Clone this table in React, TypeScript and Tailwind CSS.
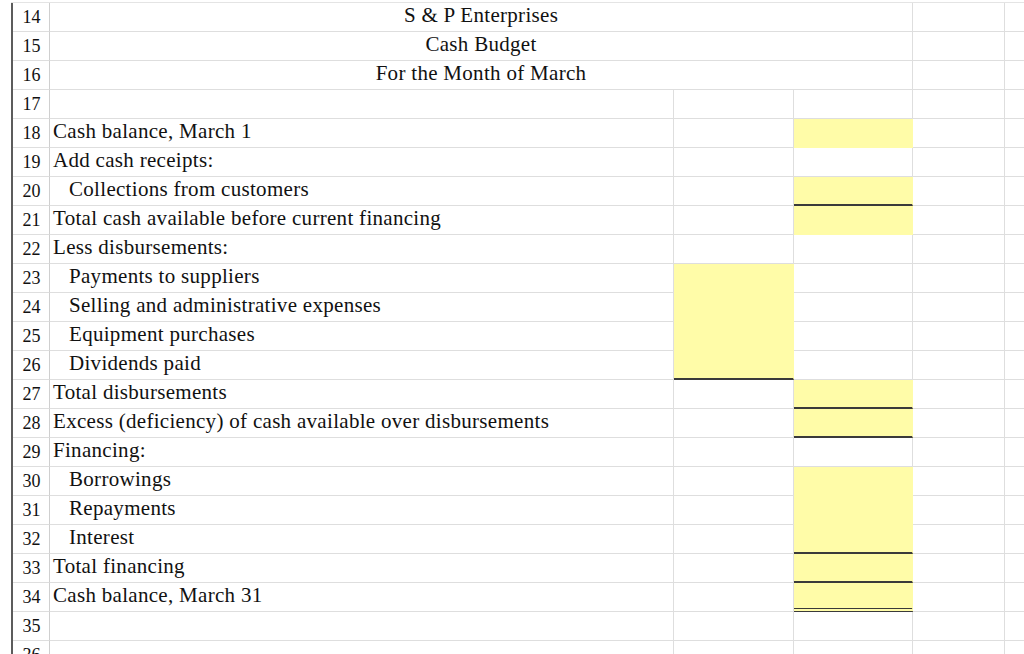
const YELLOW = "bg-[#fffca8]";

type Row = {
  n: number;
  label?: string;
  indent?: boolean;
  title?: boolean;
  b?: "fill" | "fillLine";
  c?: "fill" | "fillLine" | "fillDouble";
};

const rows: Row[] = [
  { n: 14, label: "S & P Enterprises", title: true },
  { n: 15, label: "Cash Budget", title: true },
  { n: 16, label: "For the Month of March", title: true },
  { n: 17 },
  { n: 18, label: "Cash balance, March 1", c: "fill" },
  { n: 19, label: "Add cash receipts:" },
  { n: 20, label: "Collections from customers", indent: true, c: "fillLine" },
  { n: 21, label: "Total cash available before current financing", c: "fill" },
  { n: 22, label: "Less disbursements:" },
  { n: 23, label: "Payments to suppliers", indent: true, b: "fill" },
  { n: 24, label: "Selling and administrative expenses", indent: true, b: "fill" },
  { n: 25, label: "Equipment purchases", indent: true, b: "fill" },
  { n: 26, label: "Dividends paid", indent: true, b: "fillLine" },
  { n: 27, label: "Total disbursements", c: "fillLine" },
  { n: 28, label: "Excess (deficiency) of cash available over disbursements", c: "fillLine" },
  { n: 29, label: "Financing:" },
  { n: 30, label: "Borrowings", indent: true, c: "fill" },
  { n: 31, label: "Repayments", indent: true, c: "fill" },
  { n: 32, label: "Interest", indent: true, c: "fillLine" },
  { n: 33, label: "Total financing", c: "fillLine" },
  { n: 34, label: "Cash balance, March 31", c: "fillDouble" },
  { n: 35 },
  { n: 36 },
];

function valueCell(width: string, kind?: "fill" | "fillLine" | "fillDouble") {
  if (!kind) return <div className={`${width} h-full border-r border-b border-[#dedede]`} />;
  if (kind === "fill")
    return <div className={`${width} h-full ${YELLOW} border-r border-b border-[#fffca8]`} />;
  if (kind === "fillLine")
    return <div className={`${width} h-full ${YELLOW} border-r border-r-[#fffca8] border-b-2 border-b-[#3a3a3a]`} />;
  return <div className={`${width} h-full ${YELLOW} border-r border-r-[#fffca8] border-b-4 border-double border-b-[#3a3a3a]`} />;
}

export default function App() {
  return (
    <div className="w-[1024px] h-[654px] overflow-hidden bg-white text-[#111] font-['Liberation_Serif',serif] pt-[2px]">
      <div className="flex ml-[11px] border-t border-[#e4e4e4]">
        <div className="w-[2px] bg-[#5c5c5c]" />
        <div className="flex-1 flex flex-col">
          {rows.map((r) => (
            <div key={r.n} className="flex h-[29px]">
              <div className="w-[37px] h-full border-r border-b border-r-[#cfcfcf] border-b-[#dedede] flex items-center justify-center text-[18px] leading-none pl-[1px] pb-[1px]">
                {r.n}
              </div>
              {r.title ? (
                <div className="w-[863px] h-full border-r border-b border-[#dedede] flex items-center justify-center text-[21px] tracking-[0.3px] leading-none pb-[3px]">
                  {r.label}
                </div>
              ) : (
                <>
                  <div
                    className={`w-[624px] h-full border-r border-b border-[#dedede] flex items-center text-[21px] tracking-[0.3px] leading-none whitespace-nowrap pb-[3px] ${
                      r.indent ? "pl-[19px]" : "pl-[3px]"
                    }`}
                  >
                    {r.label}
                  </div>
                  {valueCell("w-[120px]", r.b)}
                  {valueCell("w-[119px]", r.c)}
                </>
              )}
              <div className="w-[92px] h-full border-r border-b border-[#dedede]" />
              <div className="flex-1 h-full border-b border-[#dedede]" />
            </div>
          ))}
        </div>
      </div>
    </div>
  );
}
